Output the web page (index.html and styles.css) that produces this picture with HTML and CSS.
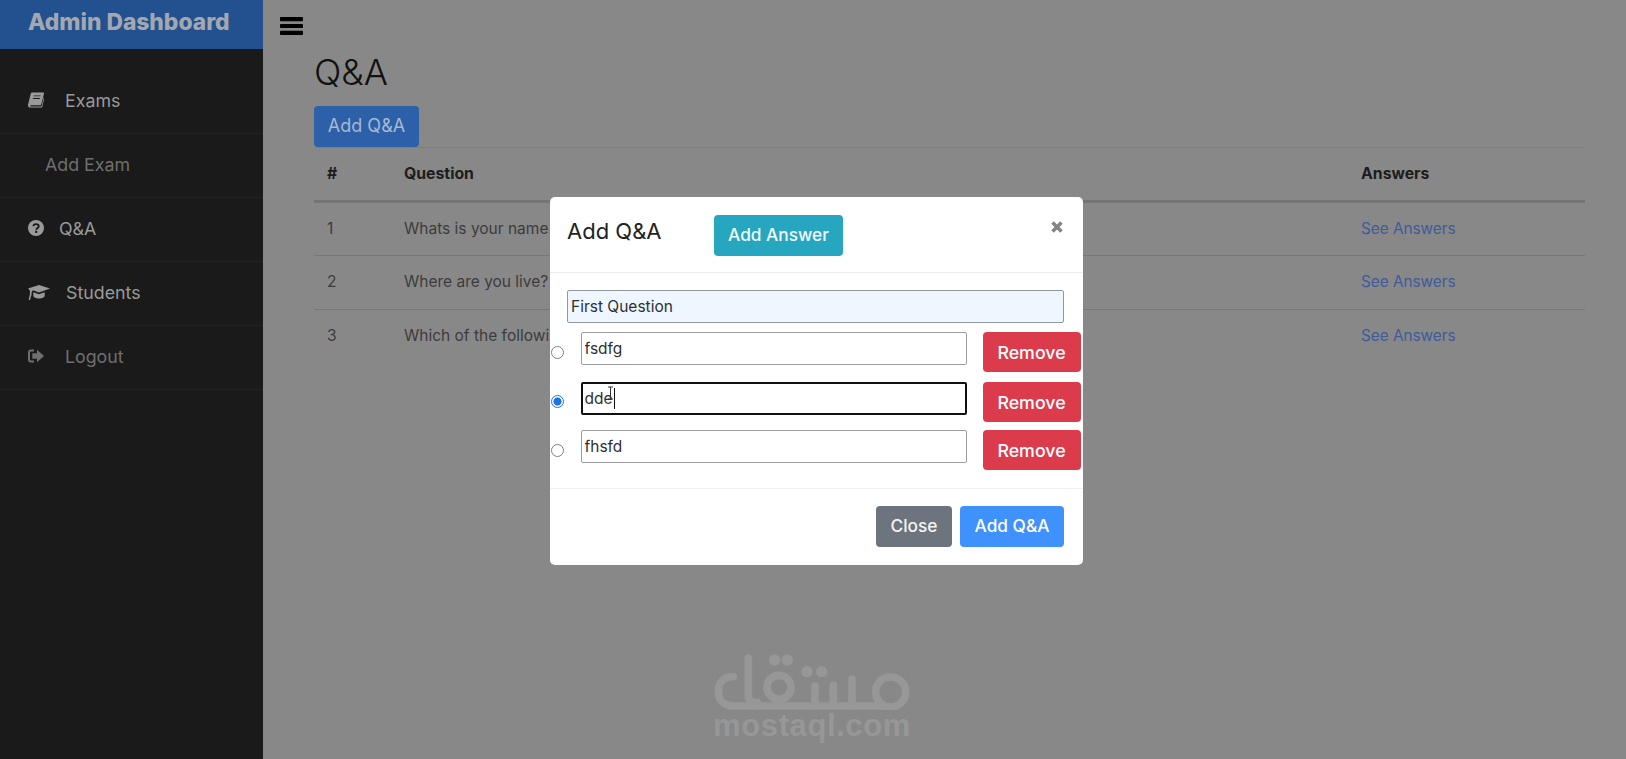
FILE: index.html
```html
<!DOCTYPE html>
<html lang="en">
<head>
<meta charset="utf-8">
<title>Admin Dashboard</title>
<link rel="stylesheet" href="styles.css">
</head>
<body>
<div class="app">
  <aside class="sidebar">
    <div class="brand">Admin Dashboard</div>
    <nav class="nav">
      <a class="nav-item nav-exams"><svg class="nav-icon" viewBox="0 0 17 16"><path d="M4 0h12.500c.6 0 .7.5.5 1L14.200 12.200c-.2.8-.7 1.300-1.600 1.300H3.200c-.7 0-1.100.3-1.100.7 0 .4.4.7 1.100.7h10.400c.5 0 .8-.3 1-.8l2.200-9.400.7.4-2.300 10c-.2.6-.7.9-1.300.9H2.800C1 16 0 14.800 0 13.500c0-.4.1-.8.2-1.200L3 1.200C3.200.5 3.500 0 4 0zM6 3.200l-.2.9h7.400l.2-.9zM5.300 6l-.2.900h7.400l.2-.9z" fill="#9a9a9a" fill-rule="evenodd"/></svg><span class="nav-label">Exams</span></a>
      <a class="nav-item nav-add dim">Add Exam</a>
      <a class="nav-item nav-qa"><svg class="nav-icon" viewBox="0 0 16 16"><circle cx="8" cy="8" r="8" fill="#9a9a9a"/><path d="M5.300 6.200C5.500 4.800 6.600 4.100 8 4.100c1.500 0 2.700.9 2.700 2.200 0 1.900-2.500 1.900-2.500 3.400" fill="none" stroke="#1a1a1a" stroke-width="1.900"/><rect x="7.100" y="10.800" width="2.200" height="2.100" fill="#1a1a1a"/></svg><span class="nav-label">Q&amp;A</span></a>
      <a class="nav-item nav-students"><svg class="nav-icon cap" viewBox="0 0 22 16"><path d="M11 1l11 3.600-11 3.800-6-2.100-1.400 1.800v2.300L2 16H.6l1.300-5.400V6.500L0 4.600z" fill="#9a9a9a"/><path d="M5.300 8.300L11 10.300l5.700-2v3.400c0 1.500-2.600 2.800-5.700 2.800s-5.700-1.300-5.700-2.800z" fill="#9a9a9a"/></svg><span class="nav-label">Students</span></a>
      <a class="nav-item nav-logout dim"><svg class="nav-icon" viewBox="0 0 16 14"><path d="M6 1.500H3C1.900 1.500 1 2.400 1 3.500v7c0 1.100.9 2 2 2h3" fill="none" stroke="#6f6f6f" stroke-width="2"/><path d="M9 .8L16 7l-7 6.200V9.800H4.300V4.200H9z" fill="#6f6f6f"/></svg><span class="nav-label">Logout</span></a>
    </nav>
  </aside>
  <main class="main">
    <div class="topbar">
      <svg class="burger" viewBox="0 0 23 18"><rect width="23" height="4.200" rx=".8"/><rect y="6.900" width="23" height="4.200" rx=".8"/><rect y="13.800" width="23" height="4.200" rx=".8"/></svg>
    </div>
    <section class="content">
      <h2 class="page-title">Q&amp;A</h2>
      <button class="btn btn-dim">Add Q&amp;A</button>
      <table class="table">
        <colgroup><col class="col-num"><col class="col-q"><col class="col-a"></colgroup>
        <thead><tr><th>#</th><th>Question</th><th>Answers</th></tr></thead>
        <tbody>
          <tr><td>1</td><td>Whats is your name</td><td><a class="link">See Answers</a></td></tr>
          <tr><td>2</td><td>Where are you live?</td><td><a class="link">See Answers</a></td></tr>
          <tr><td>3</td><td>Which of the following</td><td><a class="link">See Answers</a></td></tr>
        </tbody>
      </table>
    </section>
  </main>
</div>

<div class="watermark">
  <svg class="wm-logo" viewBox="0 0 780 240">
    <g fill="none" stroke="#979797" stroke-width="23" stroke-linecap="round">
      <path d="M160 140C125 140 115 165 115 185C115 212 135 228 165 228H610"/>
      <path d="M205 84V195C205 212 215 218 232 218"/>
      <circle cx="297" cy="172" r="36"/>
      <path d="M405 168V218M460 165V218M516 148V218"/>
      <circle cx="632" cy="186" r="45"/>
    </g>
    <g fill="#979797">
      <circle cx="284" cy="90" r="17"/><circle cx="322" cy="90" r="17"/>
      <circle cx="381" cy="125" r="17"/><circle cx="425" cy="125" r="17"/>
    </g>
  </svg>
  <div class="wm-text">mostaql.com</div>
</div>

<div class="modal">
  <header class="modal-head">
    <h5 class="modal-title">Add Q&amp;A</h5>
    <button class="btn btn-info">Add Answer</button>
    <svg class="close" viewBox="0 0 12 12"><path d="M1.500 1.500l9 9M10.500 1.500l-9 9" stroke="#848484" stroke-width="3.600"/></svg>
  </header>
  <div class="modal-body">
    <input class="field field-question" type="text" value="First Question">
    <div class="answers">
      <div class="answer">
        <input class="radio" type="radio" name="a">
        <input class="field field-answer" type="text" value="fsdfg">
        <button class="btn btn-danger">Remove</button>
      </div>
      <div class="answer answer-active">
        <input class="radio" type="radio" name="a" checked>
        <div class="field-wrap">
          <input class="field field-answer field-focus" type="text" value="dde">
          <span class="caret"></span>
          <svg class="ibeam" viewBox="0 0 7 14"><path d="M1 1h5M3.500 1v12M1 13h5" fill="none" stroke="#333" stroke-width="1"/></svg>
        </div>
        <button class="btn btn-danger">Remove</button>
      </div>
      <div class="answer">
        <input class="radio" type="radio" name="a">
        <input class="field field-answer" type="text" value="fhsfd">
        <button class="btn btn-danger">Remove</button>
      </div>
    </div>
  </div>
  <footer class="modal-foot">
    <button class="btn btn-gray">Close</button>
    <button class="btn btn-primary">Add Q&amp;A</button>
  </footer>
</div>
</body>
</html>
```
FILE: styles.css
```css
* { box-sizing: border-box; }
html, body { margin: 0; height: 100%; overflow: hidden; }
body {
  background: #888;
  font-family: Inter, "Open Sans", sans-serif;
  font-size: 15.800px;
  color: #333;
}
.app { display: flex; height: 759px; }

/* sidebar */
.sidebar { flex: 0 0 263px; background: #1a1a1a; color: #9a9a9a; }
.brand {
  height: 49px;
  background: #23508f;
  color: #a3a8b0;
  font-size: 22.800px;
  font-weight: 800;
  line-height: 43px;
  padding-left: 28px;
  white-space: nowrap;
}
.nav { padding-top: 21px; }
.nav-item {
  display: flex;
  align-items: center;
  height: 64px;
  padding: 0 0 3px 28px;
  border-bottom: 1px solid #222;
  font-size: 17.800px;
}
.dim { color: #6f6f6f; }
.nav-add { padding-left: 45px; }
.nav-icon { width: 16px; height: 16px; flex: none; }
.cap { width: 22px; }
.nav-exams .nav-label, .nav-logout .nav-label { margin-left: 21px; }
.nav-qa .nav-label { margin-left: 15px; }
.nav-students .nav-label { margin-left: 16px; }

/* main */
.main { flex: 1; min-width: 0; }
.topbar { height: 49px; padding: 17px 0 0 17px; }
.burger { display: block; width: 23px; height: 18px; fill: #000; }
.content { padding: 0 41px 0 51px; }
.page-title {
  margin: 0;
  height: 57px;
  font-size: 36px;
  font-weight: 300;
  line-height: 46px;
  color: #111;
}
.btn {
  border: 0;
  border-radius: 4px;
  height: 41px;
  padding: 0 0 2px;
  font-family: inherit;
  font-size: 17.300px;
  font-weight: 500;
  flex: none;
}
.btn-dim { display: block; width: 105px; background: #2c61aa; color: #a9b8cf; font-weight: 400; font-size: 18px; }
.table { width: 1271px; border-collapse: collapse; table-layout: fixed; border-top: 1px solid #7e7e7e; }
.col-num { width: 77px; }
.col-q { width: 957px; }
.col-a { width: 237px; }
.table th, .table td { padding: 0 13px 2px; text-align: left; }
.table th { height: 54px; border-bottom: 3px solid #757575; color: #1d1d1d; font-weight: 700; }
.table td { height: 54px; border-bottom: 1px solid #787878; color: #3c3c3c; font-size: 15.500px; }
.table tr:last-child td { border-bottom: 0; }
.link { color: #3f5b9a; font-size: 15.300px; }

/* watermark */
.watermark {
  position: absolute;
  left: 682px;
  top: 630px;
  width: 260px;
}
.wm-logo { display: block; width: 260px; height: 80px; margin-left: -2px; }
.wm-text {
  margin-top: -2px;
  text-align: center;
  font-family: "Liberation Sans", Arial, sans-serif;
  font-size: 31px;
  font-weight: 700;
  letter-spacing: .6px;
  line-height: 36px;
  color: #979797;
}

/* modal */
.modal {
  position: absolute;
  left: 550px;
  top: 197px;
  width: 532.500px;
  height: 368px;
  background: #fff;
  border-radius: 5px;
  color: #222;
}
.modal-head {
  display: flex;
  align-items: flex-start;
  height: 76px;
  padding: 18px 19.500px 0 17px;
  border-bottom: 1px solid #ececec;
}
.modal-title {
  flex: 0 0 147px;
  margin: 0;
  font-size: 22px;
  font-weight: 400;
  line-height: 32px;
  color: #222;
}
.btn-info { width: 129px; background: #27a6c0; color: #f2fbfd; }
.close { width: 12px; height: 12px; margin: 6px 0 0 auto; }
.modal-body { padding: 17px 0 18px 0; height: 215px; }
.field {
  display: block;
  height: 33px;
  padding: 0 3px;
  border: 1px solid #9d9d9d;
  border-radius: 2px;
  background: #fff;
  font-family: inherit;
  font-size: 15.500px;
  color: #2f2f2f;
  outline: 0;
}
.field-question {
  width: 497px;
  margin: 0 0 9px 17px;
  background: #eef6ff;
  padding-left: 3px;
  border-color: #8f979f;
}
.answers { display: flex; flex-direction: column; gap: 9px; }
.answer { display: flex; align-items: flex-start; padding-left: .500px; }
.answer-active { margin: 1px 0 -1px; }
.radio {
  appearance: none;
  flex: none;
  width: 13px;
  height: 13px;
  margin: 13.500px 17px 0 0;
  border: 1px solid #808080;
  border-radius: 50%;
  background: #fff;
}
.radio:checked {
  margin-top: 12.500px;
  border-color: #1a73e8;
  background: radial-gradient(circle, #1a73e8 0 3.800px, #fff 4.300px);
}
.field-answer { width: 386.500px; flex: none; }
.field-wrap { position: relative; flex: none; }
.field-focus { border: 2px solid #111; padding-left: 2px; }
.caret { position: absolute; left: 33px; top: 6px; width: 1px; height: 21px; background: #111; }
.ibeam { position: absolute; left: 26px; top: 4px; width: 7px; height: 14px; }
.btn-danger { width: 98px; height: 40px; margin-left: 15.500px; padding-bottom: 0; background: #dc3b4c; color: #fff; font-size: 17.800px; }
.modal-foot {
  display: flex;
  justify-content: flex-end;
  gap: 8px;
  height: 77px;
  padding: 17px 18.500px 0 0;
  border-top: 1px solid #f0f0f0;
}
.btn-gray { width: 76px; background: #6c757d; color: #f4f4f4; }
.btn-primary { width: 104px; background: #3f91fb; color: #fff; }
```
